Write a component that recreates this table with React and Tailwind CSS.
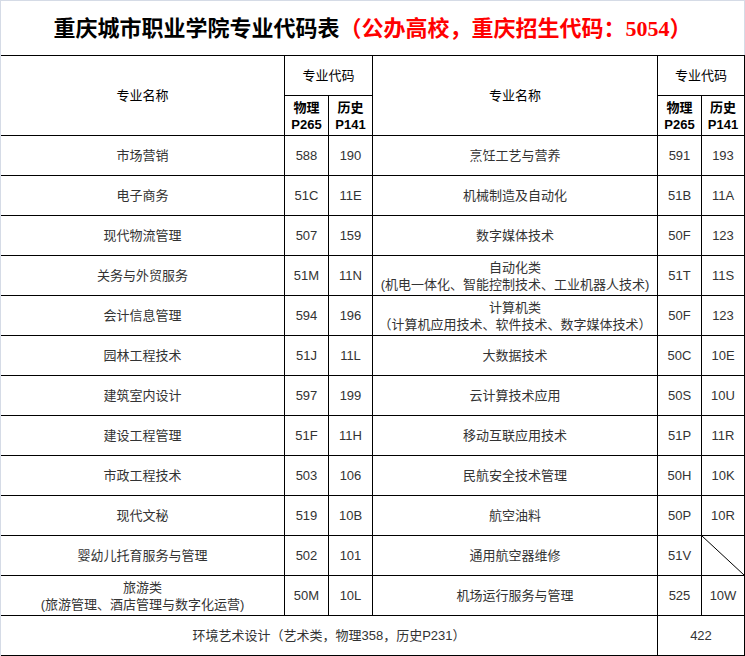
import React from "react";

const rows = [
  { a: ["市场营销"], ap: "588", ah: "190", b: ["烹饪工艺与营养"], bp: "591", bh: "193" },
  { a: ["电子商务"], ap: "51C", ah: "11E", b: ["机械制造及自动化"], bp: "51B", bh: "11A" },
  { a: ["现代物流管理"], ap: "507", ah: "159", b: ["数字媒体技术"], bp: "50F", bh: "123" },
  {
    a: ["关务与外贸服务"],
    ap: "51M",
    ah: "11N",
    b: ["自动化类", "(机电一体化、智能控制技术、工业机器人技术)"],
    bp: "51T",
    bh: "11S",
  },
  {
    a: ["会计信息管理"],
    ap: "594",
    ah: "196",
    b: ["计算机类", "（计算机应用技术、软件技术、数字媒体技术）"],
    bp: "50F",
    bh: "123",
  },
  { a: ["园林工程技术"], ap: "51J", ah: "11L", b: ["大数据技术"], bp: "50C", bh: "10E" },
  { a: ["建筑室内设计"], ap: "597", ah: "199", b: ["云计算技术应用"], bp: "50S", bh: "10U" },
  { a: ["建设工程管理"], ap: "51F", ah: "11H", b: ["移动互联应用技术"], bp: "51P", bh: "11R" },
  { a: ["市政工程技术"], ap: "503", ah: "106", b: ["民航安全技术管理"], bp: "50H", bh: "10K" },
  { a: ["现代文秘"], ap: "519", ah: "10B", b: ["航空油料"], bp: "50P", bh: "10R" },
  { a: ["婴幼儿托育服务与管理"], ap: "502", ah: "101", b: ["通用航空器维修"], bp: "51V", bh: null },
  {
    a: ["旅游类", "(旅游管理、酒店管理与数字化运营)"],
    ap: "50M",
    ah: "10L",
    b: ["机场运行服务与管理"],
    bp: "525",
    bh: "10W",
  },
];

const Cell = ({ children, className = "" }) => (
  <div
    className={`bg-white flex flex-col items-center justify-center text-center text-[13px] leading-[17px] text-[#333] ${className}`}
  >
    {children}
  </div>
);

const Lines = ({ lines }) => lines.map((l, i) => <div key={i} className="whitespace-nowrap">{l}</div>);

const Slash = () => (
  <div className="bg-white relative">
    <svg className="absolute inset-0 w-full h-full" viewBox="0 0 42 39" preserveAspectRatio="none">
      <line x1="0" y1="0" x2="42" y2="39" stroke="#000" strokeWidth="1" />
    </svg>
  </div>
);

const HeaderBlock = () => (
  <>
    <Cell className="row-span-2 text-black">专业名称</Cell>
    <Cell className="col-span-2 text-black">专业代码</Cell>
  </>
);

export default function App() {
  return (
    <div
      className="w-[745px] h-[656px] bg-white border-l border-t border-[#d5dbe6] flex flex-col"
      style={{ fontFamily: '"Liberation Sans", "Noto Sans CJK SC", sans-serif' }}
    >
      <div
        className="h-[54px] flex items-center justify-center text-[22px] font-bold text-black border-r border-[#d5dbe6]"
        style={{ fontFamily: '"Liberation Serif", "Noto Sans CJK SC", serif' }}
      >
        <span>重庆城市职业学院专业代码表</span>
        <span className="text-[#ff0000]">（公办高校，重庆招生代码：5054）</span>
      </div>

      <div className="grid grid-cols-[283px_43px_43px_284px_43px_42px] auto-rows-[39px] gap-px bg-black pt-px pr-px pb-px">
        <HeaderBlock />
        <HeaderBlock />
        <Cell className="font-bold text-black">
          <div>物理</div>
          <div>P265</div>
        </Cell>
        <Cell className="font-bold text-black">
          <div>历史</div>
          <div>P141</div>
        </Cell>
        <Cell className="font-bold text-black">
          <div>物理</div>
          <div>P265</div>
        </Cell>
        <Cell className="font-bold text-black">
          <div>历史</div>
          <div>P141</div>
        </Cell>

        {rows.map((r, i) => (
          <React.Fragment key={i}>
            <Cell>
              <Lines lines={r.a} />
            </Cell>
            <Cell>{r.ap}</Cell>
            <Cell>{r.ah}</Cell>
            <Cell>
              <Lines lines={r.b} />
            </Cell>
            <Cell>{r.bp}</Cell>
            {r.bh ? <Cell>{r.bh}</Cell> : <Slash />}
          </React.Fragment>
        ))}

        <Cell className="col-span-4">环境艺术设计（艺术类，物理358，历史P231）</Cell>
        <Cell className="col-span-2">422</Cell>
      </div>
    </div>
  );
}
